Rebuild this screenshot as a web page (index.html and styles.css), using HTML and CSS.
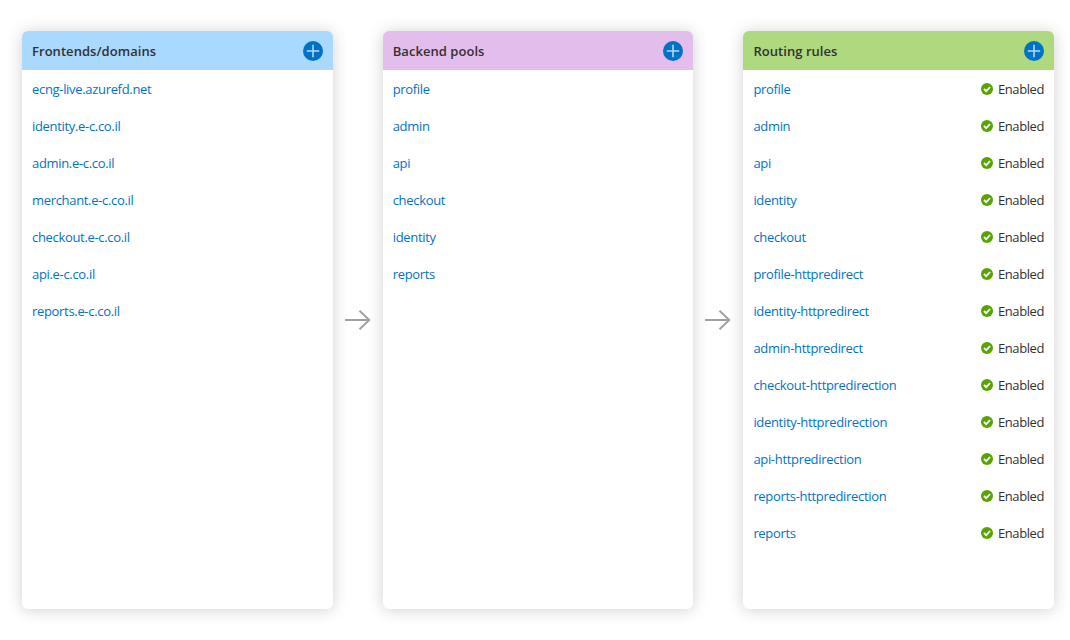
FILE: index.html
```html
<!DOCTYPE html>
<html lang="en">
<head>
<meta charset="utf-8">
<title>Front Door designer</title>
<link rel="stylesheet" href="styles.css">
</head>
<body>
<svg class="defs" width="0" height="0">
  <symbol id="plus" viewBox="0 0 20 20"><circle cx="10" cy="10" r="10" fill="#0072c6"/><path d="M10 3.8v12.4M3.8 10h12.4" stroke="#b5d8f2" stroke-width="1.6"/></symbol>
  <symbol id="arrow" viewBox="0 0 26 20"><path d="M0 10h24M14.500 .8l9.700 9.200-9.700 9.200" fill="none" stroke="#a0a0a0" stroke-width="2"/></symbol>
  <symbol id="check" viewBox="0 0 12 12"><circle cx="6" cy="6" r="6" fill="#57a300"/><path d="M3 6l2.200 2.200L9.100 4" fill="none" stroke="#fff" stroke-width="1.8"/></symbol>
</svg>
<main class="designer">
  <section class="panel">
    <header class="head blue"><h2>Frontends/domains</h2><svg class="plus"><use href="#plus"/></svg></header>
    <ul class="list">
      <li><a>ecng-live.azurefd.net</a></li>
      <li><a>identity.e-c.co.il</a></li>
      <li><a>admin.e-c.co.il</a></li>
      <li><a>merchant.e-c.co.il</a></li>
      <li><a>checkout.e-c.co.il</a></li>
      <li><a>api.e-c.co.il</a></li>
      <li><a>reports.e-c.co.il</a></li>
    </ul>
  </section>
  <svg class="arrow"><use href="#arrow"/></svg>
  <section class="panel">
    <header class="head purple"><h2>Backend pools</h2><svg class="plus"><use href="#plus"/></svg></header>
    <ul class="list">
      <li><a>profile</a></li>
      <li><a>admin</a></li>
      <li><a>api</a></li>
      <li><a>checkout</a></li>
      <li><a>identity</a></li>
      <li><a>reports</a></li>
    </ul>
  </section>
  <svg class="arrow"><use href="#arrow"/></svg>
  <section class="panel">
    <header class="head green"><h2>Routing rules</h2><svg class="plus"><use href="#plus"/></svg></header>
    <ul class="list">
      <li><a>profile</a><span class="status"><svg class="check"><use href="#check"/></svg><span>Enabled</span></span></li>
      <li><a>admin</a><span class="status"><svg class="check"><use href="#check"/></svg><span>Enabled</span></span></li>
      <li><a>api</a><span class="status"><svg class="check"><use href="#check"/></svg><span>Enabled</span></span></li>
      <li><a>identity</a><span class="status"><svg class="check"><use href="#check"/></svg><span>Enabled</span></span></li>
      <li><a>checkout</a><span class="status"><svg class="check"><use href="#check"/></svg><span>Enabled</span></span></li>
      <li><a>profile-httpredirect</a><span class="status"><svg class="check"><use href="#check"/></svg><span>Enabled</span></span></li>
      <li><a>identity-httpredirect</a><span class="status"><svg class="check"><use href="#check"/></svg><span>Enabled</span></span></li>
      <li><a>admin-httpredirect</a><span class="status"><svg class="check"><use href="#check"/></svg><span>Enabled</span></span></li>
      <li><a>checkout-httpredirection</a><span class="status"><svg class="check"><use href="#check"/></svg><span>Enabled</span></span></li>
      <li><a>identity-httpredirection</a><span class="status"><svg class="check"><use href="#check"/></svg><span>Enabled</span></span></li>
      <li><a>api-httpredirection</a><span class="status"><svg class="check"><use href="#check"/></svg><span>Enabled</span></span></li>
      <li><a>reports-httpredirection</a><span class="status"><svg class="check"><use href="#check"/></svg><span>Enabled</span></span></li>
      <li><a>reports</a><span class="status"><svg class="check"><use href="#check"/></svg><span>Enabled</span></span></li>
    </ul>
  </section>
</main>
</body>
</html>
```

FILE: styles.css
```css
* { box-sizing: border-box; }
body { margin: 0; background: #fff; font-family: "Open Sans", sans-serif; font-size: 13px; color: #323130; }
.defs { display: none; }
.designer { display: flex; align-items: center; height: 640px; padding: 31px 16px 31px 22px; }
.panel { width: 310.7px; flex: none; height: 578px; border-radius: 6px; background: #fff; box-shadow: 0 1px 16px rgba(0, 0, 0, .19); overflow: hidden; }
.head { display: flex; align-items: center; justify-content: space-between; height: 39px; padding: 0 10px; }
.head h2 { margin: 0; font-size: 13px; font-weight: 600; line-height: 18px; letter-spacing: .05px; }
.blue { background: #a9d9ff; }
.purple { background: #e3beec; }
.green { background: #aed97f; }
.plus { width: 20px; height: 20px; }
.list { list-style: none; margin: 0; padding: 1px 10px 0; }
.list li { display: flex; align-items: center; justify-content: space-between; height: 37px; line-height: 18px; }
.list a { color: #0072cc; letter-spacing: -.32px; padding-bottom: 1px; }
.status { display: flex; align-items: center; gap: 5px; letter-spacing: -.4px; padding-bottom: 1px; }
.check { width: 12px; height: 12px; }
.arrow { flex: none; width: 26px; height: 20px; margin: 0 12px; }
```
